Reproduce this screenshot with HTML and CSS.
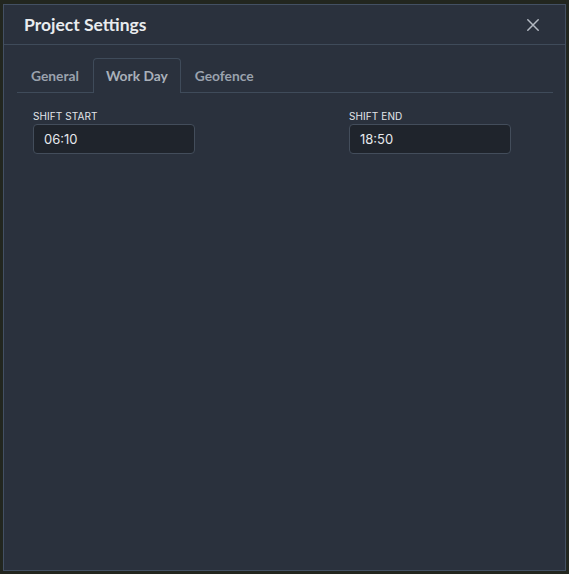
FILE: index.html
```html
<!DOCTYPE html>
<html>
<head>
<meta charset="utf-8">
<link rel="stylesheet" href="styles.css">
</head>
<body>
<div class="modal">
  <div class="modal-header">
    <h2 class="modal-title">Project Settings</h2>
    <button class="close-btn" aria-label="Close">
      <svg width="12" height="12" viewBox="0 0 12 12"><path d="M0.8 0.8 L11.2 11.2 M11.2 0.8 L0.8 11.2" stroke="#b3b9c2" stroke-width="1.5" fill="none" stroke-linecap="round"/></svg>
    </button>
  </div>
  <div class="tabs-wrap">
    <div class="tabs">
      <div class="tab">General</div>
      <div class="tab active">Work Day</div>
      <div class="tab">Geofence</div>
    </div>
    <div class="form">
      <div class="field">
        <label class="field-label">SHIFT START</label>
        <div class="input">06:10</div>
      </div>
      <div class="field">
        <label class="field-label">SHIFT END</label>
        <div class="input">18:50</div>
      </div>
    </div>
  </div>
</div>
</body>
</html>
```
FILE: styles.css
```css
* { box-sizing: border-box; }
html, body { margin: 0; padding: 0; }
body {
  width: 569px;
  height: 574px;
  background: #22261f;
  font-family: "Inter", "Liberation Sans", sans-serif;
  padding: 4px 4px 4px 3px;
}
.modal {
  width: 563px;
  height: 567px;
  background: #2a313d;
  border: 1px solid #435063;
  display: flex;
  flex-direction: column;
}
.modal-header {
  height: 40px;
  border-bottom: 1px solid #3f4b5a;
  display: flex;
  align-items: center;
  justify-content: space-between;
  padding: 0 20px 0 20px;
}
.modal-title {
  margin: 0;
  font-family: "Lato", "Open Sans", sans-serif;
  font-weight: 700;
  font-size: 17.5px;
  color: #e9ecef;
}
.close-btn {
  background: none;
  border: none;
  padding: 0;
  width: 12px;
  height: 12px;
  margin-right: 6px;
  display: flex;
}
.tabs-wrap {
  padding: 13px 12px 0 13px;
}
.tabs {
  display: flex;
  border-bottom: 1px solid #3f4b5a;
  height: 35px;
}
.tab {
  font-family: "Lato", "Open Sans", sans-serif;
  font-weight: 700;
  font-size: 13.8px;
  color: #9aa2ad;
  padding: 0 13px;
  height: 35px;
  line-height: 33px;
  border: 1px solid transparent;
  border-bottom: none;
}
.tab.active {
  border-color: #3f4b5a;
  border-radius: 4px 4px 0 0;
  background: #2a313d;
  color: #a9b0ba;
  margin-bottom: -1px;
  padding: 0 12px;
}
.form {
  display: grid;
  grid-template-columns: 162px 162px;
  column-gap: 154px;
  padding: 17px 16px 0 16px;
}
.field { display: flex; flex-direction: column; }
.field-label {
  font-size: 10px;
  color: #e3e6ea;
  line-height: 12px;
  margin-bottom: 2px;
  letter-spacing: 0.1px;
}
.input {
  height: 30px;
  background: #1f242c;
  border: 1px solid #434d5b;
  border-radius: 4px;
  color: #e6e9ed;
  font-size: 13px;
  line-height: 28px;
  padding-left: 10px;
}
```
